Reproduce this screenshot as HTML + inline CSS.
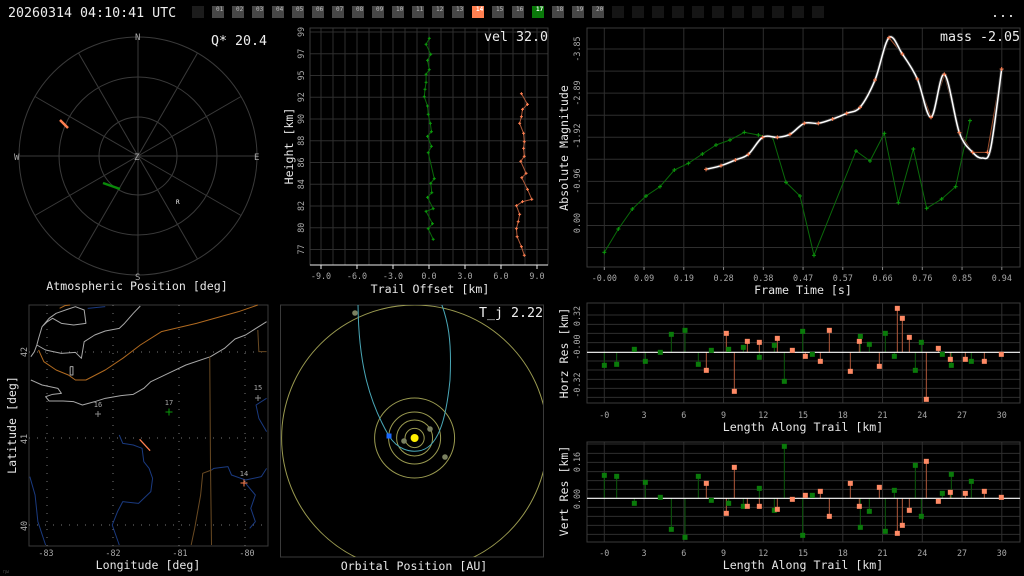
<!DOCTYPE html>
<html><head><meta charset="utf-8">
<style>
html,body{margin:0;padding:0;background:#000;width:1024px;height:576px;overflow:hidden}
svg{display:block}
text{font-family:"DejaVu Sans Mono","Liberation Mono",monospace;}
.t{fill:#e6e6e6;font-size:11.6px}
.k{fill:#a8a8a8;font-size:8.4px}
.b{fill:#eee;font-size:13.3px}
.s{fill:#ccc;font-size:6px}
</style></head><body>
<svg id="S" width="1024" height="576" viewBox="0 0 1024 576" xmlns="http://www.w3.org/2000/svg">
<rect width="1024" height="576" fill="#000"/>
<g id="G"></g>
<!-- header -->
<text class="b" x="8" y="17">20260314 04:10:41 UTC</text>
<text class="b" x="991" y="17">...</text>
<g id="NUM" class="s"></g>
<!-- polar -->
<text class="k" x="135" y="40" style="font-size:9px">N</text>
<text class="k" x="135" y="280" style="font-size:9px">S</text>
<text class="k" x="14" y="160" style="font-size:9px">W</text>
<text class="k" x="254" y="160" style="font-size:9px">E</text>
<text class="k" x="134" y="160" style="font-size:9px">Z</text>
<text x="176" y="204" style="font-size:6px;fill:#fff">R</text>
<text class="b" x="211" y="45">Q* 20.4</text>
<text class="t" x="137" y="290" text-anchor="middle">Atmospheric Position [deg]</text>
<!-- height plot -->
<text class="b" x="548" y="41" text-anchor="end">vel 32.0</text>
<text class="t" x="430" y="293" text-anchor="middle">Trail Offset [km]</text>
<text class="t" transform="translate(293,146) rotate(-90)" text-anchor="middle">Height [km]</text>
<g id="HY" class="k"></g>
<g id="HX" class="k"></g>
<!-- magnitude -->
<text class="b" x="1020" y="41" text-anchor="end">mass -2.05</text>
<text class="t" x="803" y="294" text-anchor="middle">Frame Time [s]</text>
<text class="t" transform="translate(568,148) rotate(-90)" text-anchor="middle">Absolute Magnitude</text>
<g id="MY" class="k"></g>
<g id="MX" class="k"></g>
<!-- residuals -->
<text class="t" transform="translate(568,353) rotate(-90)" text-anchor="middle">Horz Res [km]</text>
<text class="t" transform="translate(568,491) rotate(-90)" text-anchor="middle">Vert Res [km]</text>
<text class="t" x="803" y="431" text-anchor="middle">Length Along Trail [km]</text>
<text class="t" x="803" y="569" text-anchor="middle">Length Along Trail [km]</text>
<g id="RX" class="k"></g>
<text class="k" transform="translate(580,316) rotate(-90)" text-anchor="middle">0.32</text>
<text class="k" transform="translate(580,347) rotate(-90)" text-anchor="middle">-0.00</text>
<text class="k" transform="translate(580,385) rotate(-90)" text-anchor="middle">-0.32</text>
<text class="k" transform="translate(580,462) rotate(-90)" text-anchor="middle">0.16</text>
<text class="k" transform="translate(580,499) rotate(-90)" text-anchor="middle">0.00</text>
<!-- map -->
<text class="t" transform="translate(16,425) rotate(-90)" text-anchor="middle">Latitude [deg]</text>
<text class="t" x="148" y="569" text-anchor="middle">Longitude [deg]</text>
<text class="k" x="46" y="556" text-anchor="middle">-83</text>
<text class="k" x="113" y="556" text-anchor="middle">-82</text>
<text class="k" x="180" y="556" text-anchor="middle">-81</text>
<text class="k" x="247" y="556" text-anchor="middle">-80</text>
<text class="k" transform="translate(27,352) rotate(-90)" text-anchor="middle">42</text>
<text class="k" transform="translate(27,439) rotate(-90)" text-anchor="middle">41</text>
<text class="k" transform="translate(27,526) rotate(-90)" text-anchor="middle">40</text>
<text class="k" x="98" y="407" text-anchor="middle" style="font-size:7px">16</text>
<text class="k" x="169" y="405" text-anchor="middle" style="font-size:7px">17</text>
<text class="k" x="258" y="390" text-anchor="middle" style="font-size:7px">15</text>
<text class="k" x="244" y="476" text-anchor="middle" style="font-size:7px">14</text>
<text x="3" y="573" style="font-size:5px;fill:#444">ηω</text>
<!-- orbit -->
<text class="b" x="543" y="317" text-anchor="end">T_j 2.22</text>
<text class="t" x="414" y="570" text-anchor="middle">Orbital Position [AU]</text>
</svg>
<script>
var NS="http://www.w3.org/2000/svg",G=document.getElementById('G');
function el(t,a,p){var e=document.createElementNS(NS,t);for(var k in a)e.setAttribute(k,a[k]);(p||G).appendChild(e);return e;}
function L(x1,y1,x2,y2,c,w,d){var a={x1:x1,y1:y1,x2:x2,y2:y2,stroke:c,'stroke-width':w||1};if(d)a['stroke-dasharray']=d;return el('line',a);}
function P(pts,c,w){return el('polyline',{points:pts.map(function(p){return p[0]+','+p[1]}).join(' '),fill:'none',stroke:c,'stroke-width':w||1,'stroke-linejoin':'round'});}
function plus(x,y,s,c,w){L(x-s,y,x+s,y,c,w);L(x,y-s,x,y+s,c,w);}
function T(g,x,y,s,rot,anch){var e=el('text',{x:x,y:y,'text-anchor':anch||'middle'},document.getElementById(g));if(rot)e.setAttribute('transform','rotate(-90 '+x+' '+y+')');e.textContent=s;}
function rect(x,y,w,h,c,f){return el('rect',{x:x,y:y,width:w,height:h,fill:f||'none',stroke:c||'none'});}
// header boxes
for(var i=0;i<32;i++){var x=192+20*i,c=i==0?'#1c1c1c':(i<=20?'#474747':'#151515');if(i==14)c='#ff7f50';if(i==17)c='#0a7a0a';rect(x,6,12,12,null,c);
if(i>=1&&i<=20){var t=el('text',{x:x+4,y:11,style:'font-size:6px;fill:'+((i==14||i==17)?'#fff':'#bbb')+';font-weight:'+((i==14||i==17)?'bold':'normal')},document.getElementById('NUM'));t.textContent=(i<10?'0':'')+i;}}
// polar
var cx=138,cy=156;
[39,79,119].forEach(function(r){el('circle',{cx:cx,cy:cy,r:r,fill:'none',stroke:'#3a3a3a'});});
for(var a=0;a<360;a+=30){var rr=a%90==0?120:119;L(cx,cy,cx+119*Math.cos(a*Math.PI/180),cy+119*Math.sin(a*Math.PI/180),'#3a3a3a',1);}
L(60,120,68,128,'#ff7f50',2.5);
L(103,183,120,189,'#0a8a0a',2.5);
// height plot
for(var x=321;x<=538;x+=12)L(x,28,x,265,'#2e2e2e');
for(var k=0;k<11;k++){L(310,32+21.75*k,548,32+21.75*k,'#2e2e2e');}
rect(310,28,238,237,'#3a3a3a');
L(310,265,548,265,'#eee');
var hx=['-9.0','-6.0','-3.0','0.0','3.0','6.0','9.0'];
hx.forEach(function(s,i){var x=321+36*i;L(x,265,x,269,'#eee');T('HX',x,279,s);});
var hy=['99','97','95','92','90','88','86','84','82','80','77'];
hy.forEach(function(s,i){T('HY',304,32+21.75*i,s,1);});
function z1(a){return a.map(function(p){return[p[0]/2.8,p[1]/3]});}
var hg=z1([[1202,115],[1193,133],[1206,163],[1197,181],[1202,209],[1193,223],[1193,247],[1190,268],[1188,290],[1197,318],[1199,343],[1205,370],[1208,395],[1197,409],[1208,439],[1199,458],[1216,536],[1206,550],[1209,578],[1197,592],[1213,626],[1193,634],[1211,671],[1199,686],[1213,718]]);
var ho=z1([[1460,281],[1477,313],[1463,328],[1460,350],[1455,370],[1466,400],[1468,425],[1466,445],[1468,469],[1458,484],[1473,520],[1461,533],[1477,568],[1489,598],[1463,605],[1446,617],[1455,643],[1451,665],[1446,686],[1448,710],[1460,740],[1468,766]]);
P(hg,'#0a6a0a');hg.forEach(function(p){plus(p[0],p[1],1.5,'#0b9a0b');});
P(ho,'#b05a3a');ho.forEach(function(p){plus(p[0],p[1],1.5,'#ff7f50');});
// magnitude
var mxs=[];for(var k=0;k<11;k++)mxs.push(604.3+39.75*k);
mxs.forEach(function(x){L(x,28,x,267,'#2e2e2e');});
for(var k=0;k<11;k++){var y=27+22.05*k;if(y>28)L(587,y,1020,y,'#2e2e2e');}
rect(587,28,433,239,'#3a3a3a');
['-0.00','0.09','0.19','0.28','0.38','0.47','0.57','0.66','0.76','0.85','0.94'].forEach(function(s,i){T('MX',mxs[i],281,s);L(mxs[i],267,mxs[i],270,'#888');});
[['-3.85',49],['-2.89',93],['-1.92',136],['-0.96',181],['0.00',223]].forEach(function(a){T('MY',580,a[1],a[0],1);});
function z3(a,oy){return a.map(function(p){return[550+p[0]/3,oy+p[1]/3]});}
var mo=z3([[468,448],[513,437],[556,420],[595,403],[638,352],[682,352],[720,343],[763,310],[805,310],[848,297],[890,280],[930,262],[975,180],[1017,53],[1057,102],[1102,177],[1143,292],[1183,163],[1228,338],[1268,397],[1312,397],[1355,147]],20);
var mg=z3([[163,697],[205,627],[247,567],[288,528],[330,500],[373,450],[415,430],[457,402],[498,375],[540,360],[583,337],[625,345],[668,352],[708,487],[750,528],[792,706],[918,393],[960,423],[1003,340],[1045,548],[1090,387],[1130,565],[1175,537],[1217,500],[1260,302]],20);
P(mg,'#0a6a0a');mg.forEach(function(p){plus(p[0],p[1],2,'#0b9a0b');});
P(mo,'#a0502e');
var wc=z3([[468,448],[513,437],[556,420],[595,403],[638,352],[682,352],[720,343],[763,310],[805,310],[848,297],[890,280],[930,262],[975,180],[1017,53],[1057,102],[1102,177],[1143,292],[1183,163],[1228,338],[1268,397],[1297,414],[1322,385],[1355,147]],20);
function cr(pts){var d='M'+pts[0][0]+','+pts[0][1];for(var i=0;i<pts.length-1;i++){var p0=pts[Math.max(0,i-1)],p1=pts[i],p2=pts[i+1],p3=pts[Math.min(pts.length-1,i+2)];
d+=' C'+(p1[0]+(p2[0]-p0[0])/6)+','+(p1[1]+(p2[1]-p0[1])/6)+' '+(p2[0]-(p3[0]-p1[0])/6)+','+(p2[1]-(p3[1]-p1[1])/6)+' '+p2[0]+','+p2[1];}return d;}
el('path',{d:cr(wc),fill:'none',stroke:'#333','stroke-width':3.2});
el('path',{d:cr(wc),fill:'none',stroke:'#fff','stroke-width':1.5});
mo.forEach(function(p){plus(p[0],p[1],2,'#ff7f50');});
// residuals
function resid(top,bot,zero,hl,data,oy){
 mxs.forEach(function(x){L(x,top,x,bot,'#2e2e2e');});
 hl.forEach(function(y){L(587,oy+y/3,1020,oy+y/3,'#2e2e2e');});
 rect(587,top,433,bot-top,'#3a3a3a');
 var zy=oy+zero/3;
 data.forEach(function(d){var x=550+d[1]/3,y=oy+d[2]/3;L(x,zy,x,y,d[0]=='g'?'#0b5a0b':'#b0583a',1);});
 L(587,zy,1020,zy,'#fff',1.2);
 data.forEach(function(d){var x=550+d[1]/3,y=oy+d[2]/3;rect(x-2.5,y-2.5,5,5,null,d[0]=='g'?'#0a7a0a':'#ff8a65');});
}
var H=[['g',163,226],['g',200,223],['g',253,178],['g',286,214],['g',331,187],['g',364,133],['g',405,121],['g',445,223],['o',469,241],['g',484,181],['o',529,130],['g',536,178],['o',553,304],['g',580,172],['o',592,154],['g',628,202],['o',628,157],['g',673,166],['o',682,145],['g',703,274],['o',727,181],['g',758,124],['o',766,199],['g',787,193],['o',811,214],['o',838,121],['o',901,244],['o',928,154],['g',931,139],['g',958,163],['o',988,229],['g',1006,130],['g',1033,199],['o',1042,55],['o',1057,85],['o',1078,142],['g',1096,241],['g',1114,157],['o',1129,328],['o',1165,175],['g',1177,193],['o',1201,208],['g',1204,226],['o',1246,208],['g',1264,214],['o',1303,214],['o',1354,193]];
var V=[['g',163,556],['g',200,559],['g',253,640],['g',286,577],['g',331,622],['g',364,718],['g',405,742],['g',445,559],['o',469,580],['g',484,631],['o',529,670],['g',536,640],['o',553,532],['g',580,649],['o',592,649],['g',628,595],['o',628,649],['g',673,661],['o',682,658],['g',703,469],['o',727,628],['g',758,736],['o',766,616],['g',787,616],['o',811,604],['o',838,679],['o',901,580],['o',928,649],['g',931,712],['g',958,664],['o',988,592],['g',1006,724],['g',1033,601],['o',1042,730],['o',1057,706],['o',1078,661],['g',1096,526],['g',1114,679],['o',1129,514],['o',1165,634],['g',1177,610],['o',1201,607],['g',1204,553],['o',1246,610],['g',1264,574],['o',1303,604],['o',1354,622]];
resid(303,403,187,[75,103,130,158,213,240,268,295,322],H,290);
resid(442,542,625,[462,490,517,545,572,598,652,679,706,733],V,290);
['-0','3','6','9','12','15','18','21','24','27','30'].forEach(function(s,i){T('RX',mxs[i],418,s);T('RX',mxs[i],556,s);});
// map
rect(29,305,239,241,'#3a3a3a');
[352,438,525].forEach(function(y){L(29,y,268,y,'#777',1,'1 7');});
[47,113,179,245].forEach(function(x){L(x,305,x,546,'#777',1,'1 7');});
function zm(a){return a.map(function(p){return[p[0]/2.851,295+p[1]/3]});}
function MP(a,c){P(zm(a),c,1);}
MP([[120,95],[140,70],[160,55],[195,42],[215,35],[240,45],[245,85],[210,90],[175,85],[150,70],[135,80],[120,95],[110,130],[105,150],[98,170],[88,185]],'#a8a8a8');
MP([[105,150],[130,165],[175,175],[215,172],[232,190],[240,140],[270,120],[300,108],[340,100],[355,85],[380,55],[400,33]],'#a8a8a8');
MP([[88,255],[120,270],[165,280],[175,295],[150,298],[130,305],[140,318],[180,318],[210,320],[235,330],[270,320],[300,310],[345,302],[380,298],[410,280],[430,260],[480,235],[530,210],[600,185],[640,160],[670,132],[700,120],[730,100],[760,80]],'#a8a8a8');
MP([[200,215],[208,215],[208,240],[200,240],[200,215]],'#a8a8a8');
MP([[170,40],[185,32],[200,30]],'#b06a20');
MP([[110,165],[125,200],[160,225],[195,240],[215,255],[245,255],[300,225],[350,190],[400,150],[460,110],[560,85],[680,50],[735,30]],'#b06a20');
MP([[598,185],[600,500],[603,750]],'#6a4a22');
MP([[735,105],[738,170],[760,170]],'#6a4a22');
MP([[603,525],[578,535],[572,600],[555,700],[545,750]],'#6a4a22');
MP([[340,420],[350,445],[380,450],[405,460],[410,500],[425,520],[435,550],[430,590],[395,625],[350,620],[335,650],[320,690],[340,750]],'#1a3a80');
MP([[85,545],[100,600],[108,680],[130,750]],'#1a3a80');
MP([[760,520],[745,545],[700,555],[660,540],[650,515],[610,520],[603,525]],'#1a3a80');
MP([[700,565],[728,600],[715,640],[728,680],[712,700]],'#1a3a80');
MP([[760,310],[730,330],[738,370],[760,410]],'#1a3a80');
MP([[250,40],[300,35]],'#1a3a80');
var ot=zm([[398,433],[428,467]]);L(ot[0][0],ot[0][1],ot[1][0],ot[1][1],'#ff7f50',1.3);
plus(98,414,3,'#888');plus(169,412,3.5,'#0b9a0b');plus(258,398,3,'#888');plus(244,483,3.5,'#ff7f50');
// orbit
rect(280.5,305,263,252,'#3a3a3a');
el('clipPath',{id:'oc'});
var cp=document.getElementById('oc');el('rect',{x:281,y:305,width:262,height:252},cp);
var og=el('g',{'clip-path':'url(#oc)'});
var ox=414.6,oy=438;
[9.6,18,26,40,133].forEach(function(r){el('circle',{cx:ox,cy:oy,r:r,fill:'none',stroke:'#9a9a50','stroke-width':1},og);});
el('path',{d:'M358,300 C358,360 368,400 389,436 C398,450 410,452 418,451 C438,449 446,420 450,380 C452,340 448,320 440,300',fill:'none',stroke:'#4aa8b8','stroke-width':1},og);
[[355,313],[430,429],[404,441],[445,457]].forEach(function(p){el('circle',{cx:p[0],cy:p[1],r:2.8,fill:'#7a8060'},og);});
el('circle',{cx:ox,cy:oy,r:4,fill:'#ffee00'},og);
rect(386.5,433.5,5,5,null,'#1a6aff');
</script>
</body></html>
